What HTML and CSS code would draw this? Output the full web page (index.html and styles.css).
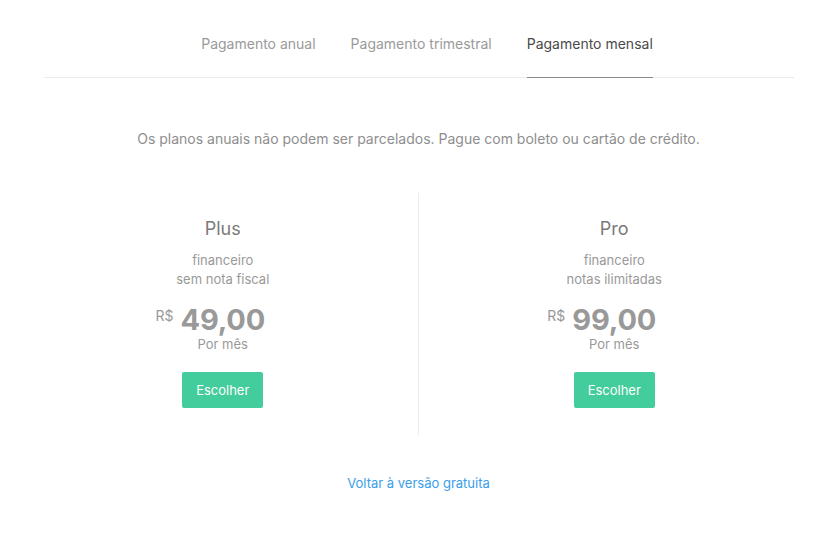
FILE: index.html
```html
<!DOCTYPE html>
<html lang="pt">
<head>
<meta charset="utf-8">
<link rel="stylesheet" href="styles.css">
</head>
<body>
<div class="page">
  <nav class="tabs">
    <div class="tab-list">
      <a class="tab">Pagamento anual</a>
      <a class="tab">Pagamento trimestral</a>
      <a class="tab active">Pagamento mensal</a>
    </div>
  </nav>
  <p class="note">Os planos anuais não podem ser parcelados. Pague com boleto ou cartão de crédito.</p>
  <div class="plans">
    <div class="plan">
      <h2 class="plan-name">Plus</h2>
      <p class="plan-desc">financeiro<br>sem nota fiscal</p>
      <div class="price"><span class="cur">R$</span><span class="amount">49,00</span></div>
      <div class="period">Por mês</div>
      <button class="choose">Escolher</button>
    </div>
    <div class="plan">
      <h2 class="plan-name">Pro</h2>
      <p class="plan-desc">financeiro<br>notas ilimitadas</p>
      <div class="price"><span class="cur">R$</span><span class="amount">99,00</span></div>
      <div class="period">Por mês</div>
      <button class="choose">Escolher</button>
    </div>
  </div>
  <a class="back">Voltar à versão gratuita</a>
</div>
</body>
</html>
```
FILE: styles.css
```css
* { box-sizing: border-box; }
html, body { margin: 0; padding: 0; background: #fff; }
body { font-family: "Inter", "Noto Sans", sans-serif; color: #888; }
.page { display: flex; flex-direction: column; align-items: center; }
.tabs { width: 750px; border-bottom: 1px solid #ebebeb; display: flex; justify-content: center; padding-left: 17px; }
.tab-list { display: flex; gap: 35px; }
.tab { font-size: 14px; color: #9a9a9a; padding: 34px 0 23px; line-height: 20px; border-bottom: 1px solid transparent; margin-bottom: -1px; }
.tab.active { color: #4a4a4a; border-bottom-color: #8a8a8a; }
.note { margin: 51px 0 0; font-size: 14px; line-height: 20px; color: #8e8e8e; }
.plans { display: flex; width: 782px; margin-top: 44px; }
.plan { flex: 1; display: flex; flex-direction: column; align-items: center; padding: 24px 0 27px; }
.plan + .plan { border-left: 1px solid #ececec; }
.plan-name { margin: 0; font-size: 18px; font-weight: 400; line-height: 24px; color: #7a7a7a; }
.plan-desc { margin: 10px 0 0; font-size: 13px; line-height: 19px; color: #999; text-align: center; }
.price { position: relative; margin-top: 15px; color: #999; }
.cur { position: absolute; right: 100%; top: 5px; margin-right: 7px; font-size: 14px; line-height: 14px; }
.amount { display: block; font-size: 29px; font-weight: 700; line-height: 32px; letter-spacing: -0.2px; }
.period { margin-top: 0; font-size: 13px; line-height: 16px; color: #999; }
.choose { margin-top: 20px; width: 81px; height: 36px; border: 0; border-radius: 2px; background: #43cc9c; color: #fff; font-family: inherit; font-size: 13px; padding: 0; }
.back { margin-top: 40px; font-size: 13px; line-height: 16px; color: #3a9eea; }
```
